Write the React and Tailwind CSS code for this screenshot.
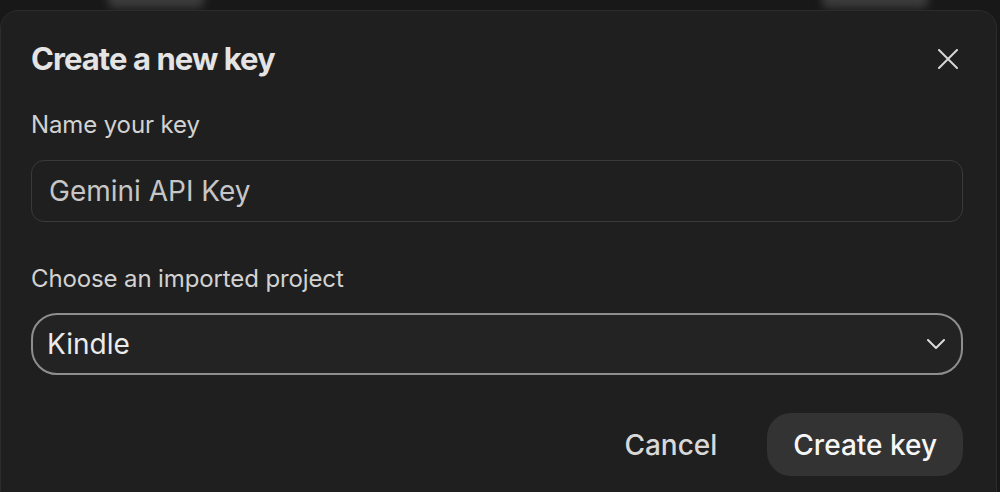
export default function App() {
  return (
    <div className="h-[492px] w-[1000px] overflow-hidden bg-[#181818] font-['Inter',sans-serif]">
      {/* page behind the dialog, blurred */}
      <div className="flex h-[10px] overflow-hidden">
        <div className="mt-[-14px] ml-[108px] h-[22px] w-[96px] rounded-md bg-[#3c3c3c] blur-[4px]" />
        <div className="mt-[-14px] ml-auto mr-[72px] h-[22px] w-[106px] rounded-md bg-[#3c3c3c] blur-[4px]" />
      </div>

      <div className="w-[997px] rounded-t-[18px] border border-[#2c2c2c] bg-[#1f1f1f] px-[30px] pt-[30px] pb-10">
        <div className="flex items-center justify-between">
          <h2 className="text-[31px] leading-[36px] font-bold tracking-[-0.03em] text-[#e4e4e4]">
            Create a new key
          </h2>
          <button className="mr-[8px] flex h-[20px] w-[20px] items-center justify-center text-[#d6d6d6]">
            <svg width="20" height="20" viewBox="0 0 20 20" fill="none" stroke="currentColor" strokeWidth="2" strokeLinecap="round">
              <path d="M1 1 19 19M19 1 1 19" />
            </svg>
          </button>
        </div>

        <label className="mt-[34px] block text-[24px] leading-[28px] tracking-[-0.005em] text-[#d2d2d2]">Name your key</label>
        <div className="mt-[21px] flex h-[62px] w-[932px] items-center rounded-[13px] border border-[#3a3a3a] bg-[#1f1f1f] pl-[17px]">
          <span className="text-[28px] text-[#c6c6c6]">Gemini API Key</span>
        </div>

        <label className="mt-[43px] block text-[24px] leading-[28px] tracking-[-0.005em] text-[#d2d2d2]">Choose an imported project</label>
        <div className="mt-[20px] flex h-[62px] w-[932px] items-center justify-between rounded-[26px] border-2 border-[#8e8e8e] bg-[#232323] pr-[16px] pl-[14px]">
          <span className="text-[28px] text-[#ebebeb]">Kindle</span>
          <svg width="18" height="10" viewBox="0 0 18 10" fill="none" stroke="#dcdcdc" strokeWidth="2" strokeLinecap="round" strokeLinejoin="round">
            <path d="M1 1 9 9 17 1" />
          </svg>
        </div>

        <div className="mt-[38px] flex w-[932px] items-center justify-end gap-[50px]">
          <button className="text-[28px] font-medium text-[#d8d8d8]">Cancel</button>
          <button className="h-[63px] rounded-[24px] bg-[#333333] px-[26px] text-[28px] font-medium text-[#f6f6f6]">
            Create key
          </button>
        </div>
      </div>
    </div>
  );
}
